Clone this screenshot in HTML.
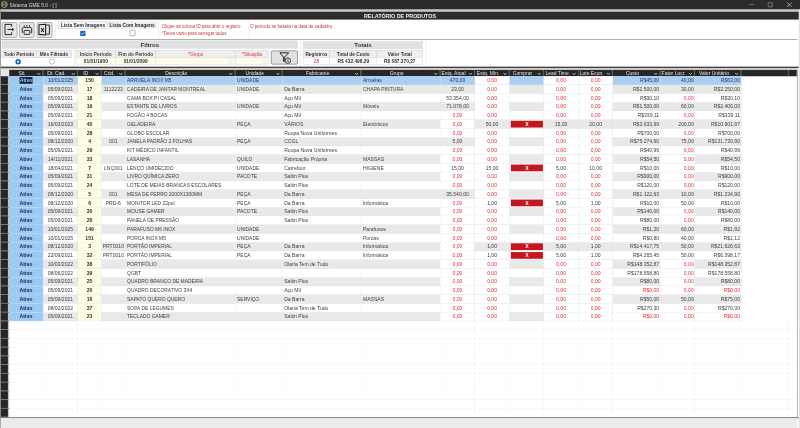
<!DOCTYPE html><html><head><meta charset="utf-8"><style>
*{box-sizing:border-box;margin:0;padding:0}
html,body{width:800px;height:428px;overflow:hidden;background:#fff}
#s{filter:contrast(1.0001);position:absolute;left:0;top:0;width:1920px;height:1027px;transform:scale(0.4166667);transform-origin:0 0;font-family:"Liberation Sans",sans-serif;background:#fff;overflow:hidden}
.a{position:absolute}
.tx{position:absolute;white-space:nowrap;line-height:1}
.hc{position:absolute;top:168px;height:15px;background:#262626;color:#e4e4e4;font-size:12px;line-height:16px;text-align:center;border-right:2px solid #707070}
.hc svg{position:absolute;right:4px;top:6px}
.c{position:absolute;height:21px;font-size:12.2px;line-height:20px;color:#404040;white-space:nowrap;overflow:hidden;border-right:1px solid #d4dce5;border-bottom:1px solid #d4dce5}
.l{text-align:left;padding-left:4px}
.r{text-align:right;padding-right:2px}
.cc{text-align:center}
.red{color:#e0303a}
.sel{position:absolute;left:2px;width:20px;height:21px;background:#262626;border-bottom:2px solid #8a8a8a;border-right:3px solid #c4c4c4}
.btn{position:absolute;top:53px;height:38px;background:#e4e4e4;border:2px solid #a4a4a4;border-radius:4px}
.hcell{position:absolute;background:#efefef;border:1px solid #d4d4d4;font-size:11.5px;font-weight:bold;color:#333;text-align:center;line-height:16px;white-space:nowrap;border-color:#cdcdcd}
</style></head><body><div id="s">
<div class="a" style="left:0;top:0;width:1920px;height:23px;background:#2b2b2b"></div>
<div class="a" style="left:0;top:23px;width:1920px;height:5px;background:#c9c9c9"></div>
<div class="a" style="left:0;top:22px;width:2px;height:1005px;background:#8a8a8a"></div>
<div class="a" style="left:1917px;top:23px;width:3px;height:1004px;background:#e4e4e4"></div>
<div class="a" style="left:1913px;top:167px;width:2px;height:837px;background:#a8a8a8"></div>
<div class="a" style="left:2px;top:28px;width:1915px;height:19px;background:#2d2d2d"></div>
<svg class="a" style="left:2px;top:2px" width="17" height="17" viewBox="0 0 17 17"><circle cx="8.4" cy="8.6" r="7.2" fill="#7d735c" stroke="#b4aa8c" stroke-width="1.6"/><path d="M4.6 3.8 H12.2 L8.4 7.6 Z M4.2 13.6 H12.6 L8.4 9.6 Z" fill="#2a2620"/></svg>
<div class="tx" style="left:23px;top:7px;font-size:11.8px;color:#dcdcdc">Sistema GME 5.0 - [ ]</div>
<div class="a" style="left:1798px;top:10px;width:11px;height:1.3px;background:#d8d8d8"></div>
<div class="a" style="left:1843px;top:6px;width:11px;height:11px;border:1.5px solid #e0e0e0;border-radius:2px"></div>
<div class="a" style="left:1846px;top:4px;width:10px;height:10px;border-top:1.5px solid #e0e0e0;border-right:1.5px solid #e0e0e0;border-radius:2px"></div>
<svg class="a" style="left:1888px;top:5px" width="13" height="13" viewBox="0 0 13 13"><path d="M1 1 L12 12 M12 1 L1 12" stroke="#e0e0e0" stroke-width="1.5"/></svg>
<div class="tx" style="left:0;top:32px;width:1920px;text-align:center;font-size:12.9px;font-weight:bold;color:#f0f0f0">RELATÓRIO DE PRODUTOS</div>
<div class="btn" style="left:4px;width:38px"></div>
<div class="btn" style="left:46px;width:37px"></div>
<div class="btn" style="left:88px;width:38px"></div>
<svg class="a" style="left:4px;top:53px" width="38" height="38" viewBox="0 0 38 38"><path d="M24 11 V5.5 H8 V30 H24 V24.5" fill="none" stroke="#1a1a1a" stroke-width="2.3"/><path d="M13.5 17.7 H26" stroke="#1a1a1a" stroke-width="2.2"/><path d="M25 13.6 L30 17.7 L25 21.8 Z" fill="#1a1a1a"/></svg>
<svg class="a" style="left:46px;top:53px" width="38" height="38" viewBox="0 0 38 38"><path d="M12.3 6.6 V11.5 M24.8 6.6 V11.5" stroke="#1a1a1a" stroke-width="1.6"/><rect x="17" y="7" width="2.6" height="3" fill="#1a1a1a"/><path d="M9 25 H7.5 V16 Q7.5 12.8 10.5 12.8 H27 Q30 12.8 30 16 V25 H28" fill="none" stroke="#1a1a1a" stroke-width="2.2" stroke-linejoin="round"/><rect x="11.8" y="20" width="14" height="9.5" rx="2" fill="none" stroke="#1a1a1a" stroke-width="2.2"/></svg>
<svg class="a" style="left:88px;top:53px" width="38" height="38" viewBox="0 0 38 38"><path d="M5.5 6.5 L21.5 5 V31 L5.5 29.5 Z" fill="none" stroke="#1a1a1a" stroke-width="2.6" stroke-linejoin="round"/><path d="M23.5 7 H30.5 V29 H23.5" fill="none" stroke="#1a1a1a" stroke-width="2.2"/><path d="M10.5 14 L17.5 24 M17.5 14 L10.5 24" stroke="#1a1a1a" stroke-width="2.4"/></svg>
<div class="a" style="left:132px;top:50px;width:1px;height:42px;background:#d8d8d8"></div>
<div class="a" style="left:380px;top:50px;width:1px;height:42px;background:#d8d8d8"></div>
<div class="a" style="left:597px;top:50px;width:1px;height:42px;background:#d8d8d8"></div>
<div class="hcell" style="left:139px;top:52px;width:120px;height:17px;line-height:16px;background:#f6f6f6;border-color:#b8b8b8;font-size:11.8px;color:#2a2a2a">Lista Sem Imagens</div>
<div class="hcell" style="left:259px;top:52px;width:116px;height:17px;line-height:16px;background:#ededed;border-color:#e4e4e4;font-size:11.8px;color:#2a2a2a">Lista Com Imagens</div>
<svg class="a" style="left:192px;top:73px" width="14" height="14" viewBox="0 0 14 14"><rect x="0.5" y="0.5" width="13" height="13" rx="2.5" fill="#1c64b8"/><path d="M3.3 7 L6 9.6 L10.8 4.4" fill="none" stroke="#fff" stroke-width="1.6"/></svg>
<div class="a" style="left:311px;top:72px;width:14px;height:14px;border:1.2px solid #555;border-radius:2.5px;background:#fff"></div>
<div class="tx" style="left:389px;top:57px;font-size:10.6px;color:#c8363c">Clique na coluna ID para abrir o registro</div>
<div class="tx" style="left:389px;top:74px;font-size:10.6px;color:#c8363c">*Deixe vazio para carregar todos</div>
<div class="tx" style="left:600px;top:57px;font-size:10.9px;color:#c8363c">O período se baseia na data de cadastro</div>
<div class="a" style="left:2px;top:94px;width:1912px;height:2px;background:#a0a0a0"></div>
<div class="a" style="left:4px;top:97px;width:711px;height:20px;background:#e1e1e1"></div>
<div class="tx" style="left:4px;top:100px;width:711px;text-align:center;font-size:14.5px;font-weight:bold;color:#333">Filtros</div>
<div class="hcell" style="left:4px;top:120px;width:83px;height:19px;line-height:19px">Todo Período</div>
<div class="hcell" style="left:86px;top:120px;width:87px;height:19px;line-height:19px">Mês Filtrado</div>
<svg class="a" style="left:36px;top:141px" width="15" height="15" viewBox="0 0 15 15"><circle cx="7.5" cy="7" r="6.6" fill="#1c5ea8"/><circle cx="7.5" cy="7" r="2.8" fill="#b8ecff"/></svg>
<svg class="a" style="left:117px;top:141px" width="15" height="15" viewBox="0 0 15 15"><circle cx="7.5" cy="7" r="6" fill="#fff" stroke="#a0a0a0" stroke-width="1.6"/></svg>
<div class="a" style="left:178px;top:97px;width:1px;height:64px;background:#d8d8d8"></div>
<div class="hcell" style="left:182px;top:120px;width:96px;height:19px;line-height:19px;color:#404040;font-weight:bold">Início Período</div>
<div class="hcell" style="left:277px;top:120px;width:97px;height:19px;line-height:19px;color:#404040;font-weight:bold">Fim do Período</div>
<div class="hcell" style="left:373px;top:120px;width:193px;height:19px;line-height:19px;color:#d8363c;font-weight:normal">*Grupo</div>
<div class="hcell" style="left:565px;top:120px;width:80px;height:19px;line-height:19px;color:#d8363c;font-weight:normal">*Situação</div>
<div class="a" style="left:182px;top:138px;width:96px;height:17px;background:#fffde9;border:1px solid #d4d4d4;font-size:11.5px;font-weight:bold;color:#333;text-align:center;line-height:16px">01/01/1900</div>
<div class="a" style="left:277px;top:138px;width:97px;height:17px;background:#fffde9;border:1px solid #d4d4d4;font-size:11.5px;font-weight:bold;color:#333;text-align:center;line-height:16px">01/01/2099</div>
<div class="a" style="left:373px;top:138px;width:193px;height:17px;background:#fffde9;border:1px solid #d4d4d4;font-size:11.5px;font-weight:bold;color:#333;text-align:center;line-height:16px"></div>
<div class="a" style="left:565px;top:138px;width:80px;height:17px;background:#fffde9;border:1px solid #d4d4d4;font-size:11.5px;font-weight:bold;color:#333;text-align:center;line-height:16px"></div>
<div class="a" style="left:548px;top:141px;width:14px;height:12px;background:#fff;border:1px solid #dcdcdc"></div>
<svg class="a" style="left:551px;top:144px" width="8" height="6" viewBox="0 0 8 6"><path d="M0.5 1 L4 4.5 L7.5 1" fill="none" stroke="#9a9a9a" stroke-width="1"/></svg>
<div class="a" style="left:627px;top:141px;width:14px;height:12px;background:#fff;border:1px solid #dcdcdc"></div>
<svg class="a" style="left:630px;top:144px" width="8" height="6" viewBox="0 0 8 6"><path d="M0.5 1 L4 4.5 L7.5 1" fill="none" stroke="#9a9a9a" stroke-width="1"/></svg>
<div class="a" style="left:650px;top:121px;width:65px;height:34px;background:#e1e1e1;border:2px solid #8c8c8c;border-radius:4px"></div>
<svg class="a" style="left:650px;top:121px" width="65" height="34" viewBox="0 0 65 34"><path d="M21.8 5.8 H42.8 L31.5 17.5 Z" fill="none" stroke="#1a1a1a" stroke-width="2.3" stroke-linejoin="round"/><rect x="29.5" y="16.5" width="3.8" height="10.5" fill="#1a1a1a"/><circle cx="40.8" cy="24.5" r="6.6" fill="#e1e1e1" stroke="#1a1a1a" stroke-width="2"/><path d="M38.3 22 L43.3 27 M43.3 22 L38.3 27" stroke="#1a1a1a" stroke-width="1.5"/></svg>
<div class="a" style="left:721px;top:97px;width:1px;height:64px;background:#d8d8d8"></div>
<div class="a" style="left:727px;top:99px;width:288px;height:19px;background:#e1e1e1"></div>
<div class="tx" style="left:727px;top:101px;width:288px;text-align:center;font-size:14.5px;font-weight:bold;color:#333">Totais</div>
<div class="hcell" style="left:727px;top:120px;width:65px;height:19px;line-height:19px">Registros</div>
<div class="hcell" style="left:791px;top:120px;width:114px;height:19px;line-height:19px">Total de Custo</div>
<div class="hcell" style="left:904px;top:120px;width:111px;height:19px;line-height:19px">Valor Total</div>
<div class="a" style="left:727px;top:138px;width:65px;height:17px;background:#fff;border:1px solid #d4d4d4;font-size:11.5px;font-weight:bold;color:#c8303a;text-align:center;line-height:16px"><span style="font-weight:normal">28</span></div>
<div class="a" style="left:791px;top:138px;width:114px;height:17px;background:#fff;border:1px solid #d4d4d4;font-size:11.5px;font-weight:bold;color:#303030;text-align:center;line-height:16px">R$ 432.498,29</div>
<div class="a" style="left:904px;top:138px;width:111px;height:17px;background:#fff;border:1px solid #d4d4d4;font-size:11.5px;font-weight:bold;color:#303030;text-align:center;line-height:16px">R$ 587.370,27</div>
<div class="a" style="left:1022px;top:97px;width:1px;height:64px;background:#d8d8d8"></div>
<div class="a" style="left:2px;top:160px;width:1915px;height:3px;background:#2a2a2a"></div>
<div class="a" style="left:2px;top:163px;width:1912px;height:5px;background:#c8c8c8"></div>
<div class="a" style="left:2px;top:166px;width:20px;height:17px;background:#e6e6e6"></div>
<div class="hc" style="left:22px;width:82px;padding-right:18px">Sit.<svg width="10" height="7" viewBox="0 0 10 7"><path d="M1.5 1.5 L5 5 L8.5 1.5" fill="none" stroke="#d4d4d4" stroke-width="2.3"/></svg></div>
<div class="hc" style="left:104px;width:83px;padding-right:18px">Dt. Cad.<svg width="10" height="7" viewBox="0 0 10 7"><path d="M1.5 1.5 L5 5 L8.5 1.5" fill="none" stroke="#d4d4d4" stroke-width="2.3"/></svg></div>
<div class="hc" style="left:187px;width:57px;padding-right:18px">ID<svg width="10" height="7" viewBox="0 0 10 7"><path d="M1.5 1.5 L5 5 L8.5 1.5" fill="none" stroke="#d4d4d4" stroke-width="2.3"/></svg></div>
<div class="hc" style="left:244px;width:57px;padding-right:18px">Cód.<svg width="10" height="7" viewBox="0 0 10 7"><path d="M1.5 1.5 L5 5 L8.5 1.5" fill="none" stroke="#d4d4d4" stroke-width="2.3"/></svg></div>
<div class="hc" style="left:301px;width:264px;padding-right:18px">Descrição<svg width="10" height="7" viewBox="0 0 10 7"><path d="M1.5 1.5 L5 5 L8.5 1.5" fill="none" stroke="#d4d4d4" stroke-width="2.3"/></svg></div>
<div class="hc" style="left:565px;width:113px;padding-right:18px">Unidade<svg width="10" height="7" viewBox="0 0 10 7"><path d="M1.5 1.5 L5 5 L8.5 1.5" fill="none" stroke="#d4d4d4" stroke-width="2.3"/></svg></div>
<div class="hc" style="left:678px;width:189px;padding-right:18px">Fabricante<svg width="10" height="7" viewBox="0 0 10 7"><path d="M1.5 1.5 L5 5 L8.5 1.5" fill="none" stroke="#d4d4d4" stroke-width="2.3"/></svg></div>
<div class="hc" style="left:867px;width:190px;padding-right:18px">Grupo<svg width="10" height="7" viewBox="0 0 10 7"><path d="M1.5 1.5 L5 5 L8.5 1.5" fill="none" stroke="#d4d4d4" stroke-width="2.3"/></svg></div>
<div class="hc" style="left:1057px;width:83px;padding-right:18px">Estq. Atual<svg width="10" height="7" viewBox="0 0 10 7"><path d="M1.5 1.5 L5 5 L8.5 1.5" fill="none" stroke="#d4d4d4" stroke-width="2.3"/></svg></div>
<div class="hc" style="left:1140px;width:83px;padding-right:18px">Estq. Mín.<svg width="10" height="7" viewBox="0 0 10 7"><path d="M1.5 1.5 L5 5 L8.5 1.5" fill="none" stroke="#d4d4d4" stroke-width="2.3"/></svg></div>
<div class="hc" style="left:1223px;width:82px;padding-right:18px">Comprar<svg width="10" height="7" viewBox="0 0 10 7"><path d="M1.5 1.5 L5 5 L8.5 1.5" fill="none" stroke="#d4d4d4" stroke-width="2.3"/></svg></div>
<div class="hc" style="left:1305px;width:84px;padding-right:18px">Lead Time<svg width="10" height="7" viewBox="0 0 10 7"><path d="M1.5 1.5 L5 5 L8.5 1.5" fill="none" stroke="#d4d4d4" stroke-width="2.3"/></svg></div>
<div class="hc" style="left:1389px;width:82px;padding-right:18px">Lote Econ.<svg width="10" height="7" viewBox="0 0 10 7"><path d="M1.5 1.5 L5 5 L8.5 1.5" fill="none" stroke="#d4d4d4" stroke-width="2.3"/></svg></div>
<div class="hc" style="left:1471px;width:114px;padding-right:18px">Custo<svg width="10" height="7" viewBox="0 0 10 7"><path d="M1.5 1.5 L5 5 L8.5 1.5" fill="none" stroke="#d4d4d4" stroke-width="2.3"/></svg></div>
<div class="hc" style="left:1585px;width:83px;padding-right:18px">Fator Lucr.<svg width="10" height="7" viewBox="0 0 10 7"><path d="M1.5 1.5 L5 5 L8.5 1.5" fill="none" stroke="#d4d4d4" stroke-width="2.3"/></svg></div>
<div class="hc" style="left:1668px;width:111px;padding-right:18px">Valor Unitário<svg width="10" height="7" viewBox="0 0 10 7"><path d="M1.5 1.5 L5 5 L8.5 1.5" fill="none" stroke="#d4d4d4" stroke-width="2.3"/></svg></div>
<div class="hc" style="left:1779px;width:114px;padding-right:0px"></div>
<div class="hc" style="left:1893px;width:20px;padding-right:0px"></div>
<div class="sel" style="top:183px"></div>
<div class="c cc" style="left:22px;top:183px;width:82px;background:#9ccaf4;color:#16264a;font-weight:bold;font-size:12.4px;"><span style="background:#0d1c3c;color:#b0d4f4;padding:1px 1px 2px;font-size:11.6px">Ativo</span></div>
<div class="c cc" style="left:104px;top:183px;width:83px;background:#a9d0f2;color:#1e3c66;">10/01/2025</div>
<div class="c cc" style="left:187px;top:183px;width:57px;background:#fffce6;color:#303030;font-weight:bold;">150</div>
<div class="c cc" style="left:244px;top:183px;width:57px;background:#a9d0f2;color:#1e3c66;"></div>
<div class="c l" style="left:301px;top:183px;width:264px;background:#a9d0f2;color:#1e3c66;font-size:11.8px;">ARRUELA INOX M5</div>
<div class="c l" style="left:565px;top:183px;width:113px;background:#a9d0f2;color:#1e3c66;font-size:11.8px;">UNIDADE</div>
<div class="c l" style="left:678px;top:183px;width:189px;background:#a9d0f2;color:#1e3c66;"></div>
<div class="c l" style="left:867px;top:183px;width:190px;background:#a9d0f2;color:#1e3c66;">Arruelas</div>
<div class="c cc" style="left:1057px;top:183px;width:83px;background:#a9d0f2;color:#1e3c66;">470,00</div>
<div class="c cc" style="left:1140px;top:183px;width:83px;background:#ffffff;color:#e0303a;">0,00</div>
<div class="c cc" style="left:1223px;top:183px;width:82px;background:#a9d0f2;color:#1e3c66;"></div>
<div class="c cc" style="left:1305px;top:183px;width:84px;background:#ffffff;color:#e0303a;">0,00</div>
<div class="c cc" style="left:1389px;top:183px;width:82px;background:#ffffff;color:#e0303a;">0,00</div>
<div class="c r" style="left:1471px;top:183px;width:114px;background:#a9d0f2;color:#1e3c66;">R$45,00</div>
<div class="c r" style="left:1585px;top:183px;width:83px;background:#a9d0f2;color:#1e3c66;">40,00</div>
<div class="c r" style="left:1668px;top:183px;width:111px;background:#a9d0f2;color:#1e3c66;">R$63,00</div>
<div class="sel" style="top:204px"></div>
<div class="c cc" style="left:22px;top:204px;width:82px;background:#9ccaf4;color:#16264a;font-weight:bold;font-size:12.4px;">Ativo</div>
<div class="c cc" style="left:104px;top:204px;width:83px;background:#e9e9e9;color:#404040;">05/09/2021</div>
<div class="c cc" style="left:187px;top:204px;width:57px;background:#fffce6;color:#303030;font-weight:bold;">17</div>
<div class="c cc" style="left:244px;top:204px;width:57px;background:#e9e9e9;color:#404040;">1112233</div>
<div class="c l" style="left:301px;top:204px;width:264px;background:#e9e9e9;color:#404040;font-size:11.8px;">CADEIRA DE JANTAR MONTREAL</div>
<div class="c l" style="left:565px;top:204px;width:113px;background:#e9e9e9;color:#404040;font-size:11.8px;">UNIDADE</div>
<div class="c l" style="left:678px;top:204px;width:189px;background:#e9e9e9;color:#404040;">Da Barra</div>
<div class="c l" style="left:867px;top:204px;width:190px;background:#e9e9e9;color:#404040;">CHAPA PINTURA</div>
<div class="c cc" style="left:1057px;top:204px;width:83px;background:#e9e9e9;color:#404040;">23,00</div>
<div class="c cc" style="left:1140px;top:204px;width:83px;background:#ffffff;color:#e0303a;">0,00</div>
<div class="c cc" style="left:1223px;top:204px;width:82px;background:#e9e9e9;color:#404040;"></div>
<div class="c cc" style="left:1305px;top:204px;width:84px;background:#ffffff;color:#e0303a;">0,00</div>
<div class="c cc" style="left:1389px;top:204px;width:82px;background:#ffffff;color:#e0303a;">0,00</div>
<div class="c r" style="left:1471px;top:204px;width:114px;background:#e9e9e9;color:#404040;">R$2.500,00</div>
<div class="c r" style="left:1585px;top:204px;width:83px;background:#e9e9e9;color:#404040;">30,00</div>
<div class="c r" style="left:1668px;top:204px;width:111px;background:#e9e9e9;color:#404040;">R$3.250,00</div>
<div class="sel" style="top:225px"></div>
<div class="c cc" style="left:22px;top:225px;width:82px;background:#9ccaf4;color:#16264a;font-weight:bold;font-size:12.4px;">Ativo</div>
<div class="c cc" style="left:104px;top:225px;width:83px;background:#ffffff;color:#404040;">05/09/2021</div>
<div class="c cc" style="left:187px;top:225px;width:57px;background:#fffce6;color:#303030;font-weight:bold;">18</div>
<div class="c cc" style="left:244px;top:225px;width:57px;background:#ffffff;color:#404040;"></div>
<div class="c l" style="left:301px;top:225px;width:264px;background:#ffffff;color:#404040;font-size:11.8px;">CAMA BOX PI CASAL</div>
<div class="c l" style="left:565px;top:225px;width:113px;background:#ffffff;color:#404040;font-size:11.8px;"></div>
<div class="c l" style="left:678px;top:225px;width:189px;background:#ffffff;color:#404040;">Aço Mil</div>
<div class="c l" style="left:867px;top:225px;width:190px;background:#ffffff;color:#404040;"></div>
<div class="c cc" style="left:1057px;top:225px;width:83px;background:#ffffff;color:#404040;">53.354,00</div>
<div class="c cc" style="left:1140px;top:225px;width:83px;background:#ffffff;color:#e0303a;">0,00</div>
<div class="c cc" style="left:1223px;top:225px;width:82px;background:#ffffff;color:#404040;"></div>
<div class="c cc" style="left:1305px;top:225px;width:84px;background:#ffffff;color:#e0303a;">0,00</div>
<div class="c cc" style="left:1389px;top:225px;width:82px;background:#ffffff;color:#e0303a;">0,00</div>
<div class="c r" style="left:1471px;top:225px;width:114px;background:#ffffff;color:#404040;">R$30,10</div>
<div class="c r" style="left:1585px;top:225px;width:83px;background:#ffffff;color:#e0303a;">0,00</div>
<div class="c r" style="left:1668px;top:225px;width:111px;background:#ffffff;color:#404040;">R$30,10</div>
<div class="sel" style="top:246px"></div>
<div class="c cc" style="left:22px;top:246px;width:82px;background:#9ccaf4;color:#16264a;font-weight:bold;font-size:12.4px;">Ativo</div>
<div class="c cc" style="left:104px;top:246px;width:83px;background:#e9e9e9;color:#404040;">05/09/2021</div>
<div class="c cc" style="left:187px;top:246px;width:57px;background:#fffce6;color:#303030;font-weight:bold;">19</div>
<div class="c cc" style="left:244px;top:246px;width:57px;background:#e9e9e9;color:#404040;"></div>
<div class="c l" style="left:301px;top:246px;width:264px;background:#e9e9e9;color:#404040;font-size:11.8px;">ESTANTE DE LIVROS</div>
<div class="c l" style="left:565px;top:246px;width:113px;background:#e9e9e9;color:#404040;font-size:11.8px;">UNIDADE</div>
<div class="c l" style="left:678px;top:246px;width:189px;background:#e9e9e9;color:#404040;">Aço Mil</div>
<div class="c l" style="left:867px;top:246px;width:190px;background:#e9e9e9;color:#404040;">Móveis</div>
<div class="c cc" style="left:1057px;top:246px;width:83px;background:#e9e9e9;color:#404040;">71.078,00</div>
<div class="c cc" style="left:1140px;top:246px;width:83px;background:#ffffff;color:#e0303a;">0,00</div>
<div class="c cc" style="left:1223px;top:246px;width:82px;background:#e9e9e9;color:#404040;"></div>
<div class="c cc" style="left:1305px;top:246px;width:84px;background:#ffffff;color:#e0303a;">0,00</div>
<div class="c cc" style="left:1389px;top:246px;width:82px;background:#ffffff;color:#e0303a;">0,00</div>
<div class="c r" style="left:1471px;top:246px;width:114px;background:#e9e9e9;color:#404040;">R$1.500,00</div>
<div class="c r" style="left:1585px;top:246px;width:83px;background:#e9e9e9;color:#404040;">60,00</div>
<div class="c r" style="left:1668px;top:246px;width:111px;background:#e9e9e9;color:#404040;">R$2.400,00</div>
<div class="sel" style="top:267px"></div>
<div class="c cc" style="left:22px;top:267px;width:82px;background:#9ccaf4;color:#16264a;font-weight:bold;font-size:12.4px;">Ativo</div>
<div class="c cc" style="left:104px;top:267px;width:83px;background:#ffffff;color:#404040;">05/09/2021</div>
<div class="c cc" style="left:187px;top:267px;width:57px;background:#fffce6;color:#303030;font-weight:bold;">21</div>
<div class="c cc" style="left:244px;top:267px;width:57px;background:#ffffff;color:#404040;"></div>
<div class="c l" style="left:301px;top:267px;width:264px;background:#ffffff;color:#404040;font-size:11.8px;">FOGÃO 4 BOCAS</div>
<div class="c l" style="left:565px;top:267px;width:113px;background:#ffffff;color:#404040;font-size:11.8px;"></div>
<div class="c l" style="left:678px;top:267px;width:189px;background:#ffffff;color:#404040;">Aço Mil</div>
<div class="c l" style="left:867px;top:267px;width:190px;background:#ffffff;color:#404040;"></div>
<div class="c cc" style="left:1057px;top:267px;width:83px;background:#ffffff;color:#e0303a;">0,00</div>
<div class="c cc" style="left:1140px;top:267px;width:83px;background:#ffffff;color:#e0303a;">0,00</div>
<div class="c cc" style="left:1223px;top:267px;width:82px;background:#ffffff;color:#404040;"></div>
<div class="c cc" style="left:1305px;top:267px;width:84px;background:#ffffff;color:#e0303a;">0,00</div>
<div class="c cc" style="left:1389px;top:267px;width:82px;background:#ffffff;color:#e0303a;">0,00</div>
<div class="c r" style="left:1471px;top:267px;width:114px;background:#ffffff;color:#404040;">R$339,11</div>
<div class="c r" style="left:1585px;top:267px;width:83px;background:#ffffff;color:#e0303a;">0,00</div>
<div class="c r" style="left:1668px;top:267px;width:111px;background:#ffffff;color:#404040;">R$339,11</div>
<div class="sel" style="top:288px"></div>
<div class="c cc" style="left:22px;top:288px;width:82px;background:#9ccaf4;color:#16264a;font-weight:bold;font-size:12.4px;">Ativo</div>
<div class="c cc" style="left:104px;top:288px;width:83px;background:#e9e9e9;color:#404040;">16/03/2023</div>
<div class="c cc" style="left:187px;top:288px;width:57px;background:#fffce6;color:#303030;font-weight:bold;">40</div>
<div class="c cc" style="left:244px;top:288px;width:57px;background:#e9e9e9;color:#404040;"></div>
<div class="c l" style="left:301px;top:288px;width:264px;background:#e9e9e9;color:#404040;font-size:11.8px;">GELADEIRA</div>
<div class="c l" style="left:565px;top:288px;width:113px;background:#e9e9e9;color:#404040;font-size:11.8px;">PEÇA</div>
<div class="c l" style="left:678px;top:288px;width:189px;background:#e9e9e9;color:#404040;">VÁRIOS</div>
<div class="c l" style="left:867px;top:288px;width:190px;background:#e9e9e9;color:#404040;">Eletrônicos</div>
<div class="c cc" style="left:1057px;top:288px;width:83px;background:#ffffff;color:#e0303a;">0,00</div>
<div class="c cc" style="left:1140px;top:288px;width:83px;background:#e9e9e9;color:#404040;">50,00</div>
<div class="c cc" style="left:1223px;top:288px;width:82px;background:#e9e9e9;color:#404040;"><span style="position:absolute;left:3px;top:2px;right:1px;bottom:2px;background:#c4161c;color:#fff;font-weight:bold;line-height:17px;text-align:center">X</span></div>
<div class="c cc" style="left:1305px;top:288px;width:84px;background:#e9e9e9;color:#404040;">15,00</div>
<div class="c cc" style="left:1389px;top:288px;width:82px;background:#e9e9e9;color:#404040;">20,00</div>
<div class="c r" style="left:1471px;top:288px;width:114px;background:#e9e9e9;color:#404040;">R$3.633,99</div>
<div class="c r" style="left:1585px;top:288px;width:83px;background:#e9e9e9;color:#404040;">200,00</div>
<div class="c r" style="left:1668px;top:288px;width:111px;background:#e9e9e9;color:#404040;">R$10.901,97</div>
<div class="sel" style="top:309px"></div>
<div class="c cc" style="left:22px;top:309px;width:82px;background:#9ccaf4;color:#16264a;font-weight:bold;font-size:12.4px;">Ativo</div>
<div class="c cc" style="left:104px;top:309px;width:83px;background:#ffffff;color:#404040;">05/09/2021</div>
<div class="c cc" style="left:187px;top:309px;width:57px;background:#fffce6;color:#303030;font-weight:bold;">28</div>
<div class="c cc" style="left:244px;top:309px;width:57px;background:#ffffff;color:#404040;"></div>
<div class="c l" style="left:301px;top:309px;width:264px;background:#ffffff;color:#404040;font-size:11.8px;">GLOBO ESCOLAR</div>
<div class="c l" style="left:565px;top:309px;width:113px;background:#ffffff;color:#404040;font-size:11.8px;"></div>
<div class="c l" style="left:678px;top:309px;width:189px;background:#ffffff;color:#404040;">Roupa Nova Uniformes</div>
<div class="c l" style="left:867px;top:309px;width:190px;background:#ffffff;color:#404040;"></div>
<div class="c cc" style="left:1057px;top:309px;width:83px;background:#ffffff;color:#e0303a;">0,00</div>
<div class="c cc" style="left:1140px;top:309px;width:83px;background:#ffffff;color:#e0303a;">0,00</div>
<div class="c cc" style="left:1223px;top:309px;width:82px;background:#ffffff;color:#404040;"></div>
<div class="c cc" style="left:1305px;top:309px;width:84px;background:#ffffff;color:#e0303a;">0,00</div>
<div class="c cc" style="left:1389px;top:309px;width:82px;background:#ffffff;color:#e0303a;">0,00</div>
<div class="c r" style="left:1471px;top:309px;width:114px;background:#ffffff;color:#404040;">R$700,00</div>
<div class="c r" style="left:1585px;top:309px;width:83px;background:#ffffff;color:#e0303a;">0,00</div>
<div class="c r" style="left:1668px;top:309px;width:111px;background:#ffffff;color:#404040;">R$700,00</div>
<div class="sel" style="top:330px"></div>
<div class="c cc" style="left:22px;top:330px;width:82px;background:#9ccaf4;color:#16264a;font-weight:bold;font-size:12.4px;">Ativo</div>
<div class="c cc" style="left:104px;top:330px;width:83px;background:#e9e9e9;color:#404040;">08/12/2020</div>
<div class="c cc" style="left:187px;top:330px;width:57px;background:#fffce6;color:#303030;font-weight:bold;">4</div>
<div class="c cc" style="left:244px;top:330px;width:57px;background:#e9e9e9;color:#404040;">001</div>
<div class="c l" style="left:301px;top:330px;width:264px;background:#e9e9e9;color:#404040;font-size:11.8px;">JANELA PADRÃO 2 FOLHAS</div>
<div class="c l" style="left:565px;top:330px;width:113px;background:#e9e9e9;color:#404040;font-size:11.8px;">PEÇA</div>
<div class="c l" style="left:678px;top:330px;width:189px;background:#e9e9e9;color:#404040;">CCGL</div>
<div class="c l" style="left:867px;top:330px;width:190px;background:#e9e9e9;color:#404040;"></div>
<div class="c cc" style="left:1057px;top:330px;width:83px;background:#e9e9e9;color:#404040;">5,00</div>
<div class="c cc" style="left:1140px;top:330px;width:83px;background:#ffffff;color:#e0303a;">0,00</div>
<div class="c cc" style="left:1223px;top:330px;width:82px;background:#e9e9e9;color:#404040;"></div>
<div class="c cc" style="left:1305px;top:330px;width:84px;background:#ffffff;color:#e0303a;">0,00</div>
<div class="c cc" style="left:1389px;top:330px;width:82px;background:#ffffff;color:#e0303a;">0,00</div>
<div class="c r" style="left:1471px;top:330px;width:114px;background:#e9e9e9;color:#404040;">R$75.274,60</div>
<div class="c r" style="left:1585px;top:330px;width:83px;background:#e9e9e9;color:#404040;">75,00</div>
<div class="c r" style="left:1668px;top:330px;width:111px;background:#e9e9e9;color:#404040;">R$131.730,90</div>
<div class="sel" style="top:351px"></div>
<div class="c cc" style="left:22px;top:351px;width:82px;background:#9ccaf4;color:#16264a;font-weight:bold;font-size:12.4px;">Ativo</div>
<div class="c cc" style="left:104px;top:351px;width:83px;background:#ffffff;color:#404040;">05/09/2021</div>
<div class="c cc" style="left:187px;top:351px;width:57px;background:#fffce6;color:#303030;font-weight:bold;">29</div>
<div class="c cc" style="left:244px;top:351px;width:57px;background:#ffffff;color:#404040;"></div>
<div class="c l" style="left:301px;top:351px;width:264px;background:#ffffff;color:#404040;font-size:11.8px;">KIT MÉDICO INFANTIL</div>
<div class="c l" style="left:565px;top:351px;width:113px;background:#ffffff;color:#404040;font-size:11.8px;"></div>
<div class="c l" style="left:678px;top:351px;width:189px;background:#ffffff;color:#404040;">Roupa Nova Uniformes</div>
<div class="c l" style="left:867px;top:351px;width:190px;background:#ffffff;color:#404040;"></div>
<div class="c cc" style="left:1057px;top:351px;width:83px;background:#ffffff;color:#e0303a;">0,00</div>
<div class="c cc" style="left:1140px;top:351px;width:83px;background:#ffffff;color:#e0303a;">0,00</div>
<div class="c cc" style="left:1223px;top:351px;width:82px;background:#ffffff;color:#404040;"></div>
<div class="c cc" style="left:1305px;top:351px;width:84px;background:#ffffff;color:#e0303a;">0,00</div>
<div class="c cc" style="left:1389px;top:351px;width:82px;background:#ffffff;color:#e0303a;">0,00</div>
<div class="c r" style="left:1471px;top:351px;width:114px;background:#ffffff;color:#404040;">R$40,99</div>
<div class="c r" style="left:1585px;top:351px;width:83px;background:#ffffff;color:#e0303a;">0,00</div>
<div class="c r" style="left:1668px;top:351px;width:111px;background:#ffffff;color:#404040;">R$40,99</div>
<div class="sel" style="top:372px"></div>
<div class="c cc" style="left:22px;top:372px;width:82px;background:#9ccaf4;color:#16264a;font-weight:bold;font-size:12.4px;">Ativo</div>
<div class="c cc" style="left:104px;top:372px;width:83px;background:#e9e9e9;color:#404040;">14/11/2021</div>
<div class="c cc" style="left:187px;top:372px;width:57px;background:#fffce6;color:#303030;font-weight:bold;">33</div>
<div class="c cc" style="left:244px;top:372px;width:57px;background:#e9e9e9;color:#404040;"></div>
<div class="c l" style="left:301px;top:372px;width:264px;background:#e9e9e9;color:#404040;font-size:11.8px;">LASANHA</div>
<div class="c l" style="left:565px;top:372px;width:113px;background:#e9e9e9;color:#404040;font-size:11.8px;">QUILO</div>
<div class="c l" style="left:678px;top:372px;width:189px;background:#e9e9e9;color:#404040;">Fabricação Própria</div>
<div class="c l" style="left:867px;top:372px;width:190px;background:#e9e9e9;color:#404040;">MASSAS</div>
<div class="c cc" style="left:1057px;top:372px;width:83px;background:#ffffff;color:#e0303a;">0,00</div>
<div class="c cc" style="left:1140px;top:372px;width:83px;background:#ffffff;color:#e0303a;">0,00</div>
<div class="c cc" style="left:1223px;top:372px;width:82px;background:#e9e9e9;color:#404040;"></div>
<div class="c cc" style="left:1305px;top:372px;width:84px;background:#ffffff;color:#e0303a;">0,00</div>
<div class="c cc" style="left:1389px;top:372px;width:82px;background:#ffffff;color:#e0303a;">0,00</div>
<div class="c r" style="left:1471px;top:372px;width:114px;background:#e9e9e9;color:#404040;">R$54,50</div>
<div class="c r" style="left:1585px;top:372px;width:83px;background:#ffffff;color:#e0303a;">0,00</div>
<div class="c r" style="left:1668px;top:372px;width:111px;background:#e9e9e9;color:#404040;">R$54,50</div>
<div class="sel" style="top:393px"></div>
<div class="c cc" style="left:22px;top:393px;width:82px;background:#9ccaf4;color:#16264a;font-weight:bold;font-size:12.4px;">Ativo</div>
<div class="c cc" style="left:104px;top:393px;width:83px;background:#ffffff;color:#404040;">18/04/2021</div>
<div class="c cc" style="left:187px;top:393px;width:57px;background:#fffce6;color:#303030;font-weight:bold;">7</div>
<div class="c cc" style="left:244px;top:393px;width:57px;background:#ffffff;color:#404040;">LNÇ001</div>
<div class="c l" style="left:301px;top:393px;width:264px;background:#ffffff;color:#404040;font-size:11.8px;">LENÇO UMIDECIDO</div>
<div class="c l" style="left:565px;top:393px;width:113px;background:#ffffff;color:#404040;font-size:11.8px;">UNIDADE</div>
<div class="c l" style="left:678px;top:393px;width:189px;background:#ffffff;color:#404040;">Carrefour</div>
<div class="c l" style="left:867px;top:393px;width:190px;background:#ffffff;color:#404040;">HIGIENE</div>
<div class="c cc" style="left:1057px;top:393px;width:83px;background:#ffffff;color:#404040;">15,00</div>
<div class="c cc" style="left:1140px;top:393px;width:83px;background:#ffffff;color:#404040;">15,00</div>
<div class="c cc" style="left:1223px;top:393px;width:82px;background:#ffffff;color:#404040;"><span style="position:absolute;left:3px;top:2px;right:1px;bottom:2px;background:#c4161c;color:#fff;font-weight:bold;line-height:17px;text-align:center">X</span></div>
<div class="c cc" style="left:1305px;top:393px;width:84px;background:#ffffff;color:#404040;">5,00</div>
<div class="c cc" style="left:1389px;top:393px;width:82px;background:#ffffff;color:#404040;">10,00</div>
<div class="c r" style="left:1471px;top:393px;width:114px;background:#ffffff;color:#404040;">R$10,00</div>
<div class="c r" style="left:1585px;top:393px;width:83px;background:#ffffff;color:#e0303a;">0,00</div>
<div class="c r" style="left:1668px;top:393px;width:111px;background:#ffffff;color:#404040;">R$10,00</div>
<div class="sel" style="top:414px"></div>
<div class="c cc" style="left:22px;top:414px;width:82px;background:#9ccaf4;color:#16264a;font-weight:bold;font-size:12.4px;">Ativo</div>
<div class="c cc" style="left:104px;top:414px;width:83px;background:#e9e9e9;color:#404040;">05/09/2021</div>
<div class="c cc" style="left:187px;top:414px;width:57px;background:#fffce6;color:#303030;font-weight:bold;">31</div>
<div class="c cc" style="left:244px;top:414px;width:57px;background:#e9e9e9;color:#404040;"></div>
<div class="c l" style="left:301px;top:414px;width:264px;background:#e9e9e9;color:#404040;font-size:11.8px;">LIVRO QUÍMICA ZERO</div>
<div class="c l" style="left:565px;top:414px;width:113px;background:#e9e9e9;color:#404040;font-size:11.8px;">PACOTE</div>
<div class="c l" style="left:678px;top:414px;width:189px;background:#e9e9e9;color:#404040;">Saltin Plus</div>
<div class="c l" style="left:867px;top:414px;width:190px;background:#e9e9e9;color:#404040;"></div>
<div class="c cc" style="left:1057px;top:414px;width:83px;background:#ffffff;color:#e0303a;">0,00</div>
<div class="c cc" style="left:1140px;top:414px;width:83px;background:#ffffff;color:#e0303a;">0,00</div>
<div class="c cc" style="left:1223px;top:414px;width:82px;background:#e9e9e9;color:#404040;"></div>
<div class="c cc" style="left:1305px;top:414px;width:84px;background:#ffffff;color:#e0303a;">0,00</div>
<div class="c cc" style="left:1389px;top:414px;width:82px;background:#ffffff;color:#e0303a;">0,00</div>
<div class="c r" style="left:1471px;top:414px;width:114px;background:#e9e9e9;color:#404040;">R$900,00</div>
<div class="c r" style="left:1585px;top:414px;width:83px;background:#ffffff;color:#e0303a;">0,00</div>
<div class="c r" style="left:1668px;top:414px;width:111px;background:#e9e9e9;color:#404040;">R$900,00</div>
<div class="sel" style="top:435px"></div>
<div class="c cc" style="left:22px;top:435px;width:82px;background:#9ccaf4;color:#16264a;font-weight:bold;font-size:12.4px;">Ativo</div>
<div class="c cc" style="left:104px;top:435px;width:83px;background:#ffffff;color:#404040;">05/09/2021</div>
<div class="c cc" style="left:187px;top:435px;width:57px;background:#fffce6;color:#303030;font-weight:bold;">24</div>
<div class="c cc" style="left:244px;top:435px;width:57px;background:#ffffff;color:#404040;"></div>
<div class="c l" style="left:301px;top:435px;width:264px;background:#ffffff;color:#404040;font-size:11.8px;">LOTE DE MEIAS BRANCAS ESCOLARES</div>
<div class="c l" style="left:565px;top:435px;width:113px;background:#ffffff;color:#404040;font-size:11.8px;"></div>
<div class="c l" style="left:678px;top:435px;width:189px;background:#ffffff;color:#404040;">Saltin Plus</div>
<div class="c l" style="left:867px;top:435px;width:190px;background:#ffffff;color:#404040;"></div>
<div class="c cc" style="left:1057px;top:435px;width:83px;background:#ffffff;color:#e0303a;">0,00</div>
<div class="c cc" style="left:1140px;top:435px;width:83px;background:#ffffff;color:#e0303a;">0,00</div>
<div class="c cc" style="left:1223px;top:435px;width:82px;background:#ffffff;color:#404040;"></div>
<div class="c cc" style="left:1305px;top:435px;width:84px;background:#ffffff;color:#e0303a;">0,00</div>
<div class="c cc" style="left:1389px;top:435px;width:82px;background:#ffffff;color:#e0303a;">0,00</div>
<div class="c r" style="left:1471px;top:435px;width:114px;background:#ffffff;color:#404040;">R$120,00</div>
<div class="c r" style="left:1585px;top:435px;width:83px;background:#ffffff;color:#e0303a;">0,00</div>
<div class="c r" style="left:1668px;top:435px;width:111px;background:#ffffff;color:#404040;">R$120,00</div>
<div class="sel" style="top:456px"></div>
<div class="c cc" style="left:22px;top:456px;width:82px;background:#9ccaf4;color:#16264a;font-weight:bold;font-size:12.4px;">Ativo</div>
<div class="c cc" style="left:104px;top:456px;width:83px;background:#e9e9e9;color:#404040;">08/12/2020</div>
<div class="c cc" style="left:187px;top:456px;width:57px;background:#fffce6;color:#303030;font-weight:bold;">5</div>
<div class="c cc" style="left:244px;top:456px;width:57px;background:#e9e9e9;color:#404040;">001</div>
<div class="c l" style="left:301px;top:456px;width:264px;background:#e9e9e9;color:#404040;font-size:11.8px;">MESA DE FERRO 2000X1300MM</div>
<div class="c l" style="left:565px;top:456px;width:113px;background:#e9e9e9;color:#404040;font-size:11.8px;">PEÇA</div>
<div class="c l" style="left:678px;top:456px;width:189px;background:#e9e9e9;color:#404040;">Da Barra</div>
<div class="c l" style="left:867px;top:456px;width:190px;background:#e9e9e9;color:#404040;"></div>
<div class="c cc" style="left:1057px;top:456px;width:83px;background:#e9e9e9;color:#404040;">35.540,00</div>
<div class="c cc" style="left:1140px;top:456px;width:83px;background:#ffffff;color:#e0303a;">0,00</div>
<div class="c cc" style="left:1223px;top:456px;width:82px;background:#e9e9e9;color:#404040;"></div>
<div class="c cc" style="left:1305px;top:456px;width:84px;background:#ffffff;color:#e0303a;">0,00</div>
<div class="c cc" style="left:1389px;top:456px;width:82px;background:#ffffff;color:#e0303a;">0,00</div>
<div class="c r" style="left:1471px;top:456px;width:114px;background:#e9e9e9;color:#404040;">R$1.122,63</div>
<div class="c r" style="left:1585px;top:456px;width:83px;background:#e9e9e9;color:#404040;">10,00</div>
<div class="c r" style="left:1668px;top:456px;width:111px;background:#e9e9e9;color:#404040;">R$1.234,90</div>
<div class="sel" style="top:477px"></div>
<div class="c cc" style="left:22px;top:477px;width:82px;background:#9ccaf4;color:#16264a;font-weight:bold;font-size:12.4px;">Ativo</div>
<div class="c cc" style="left:104px;top:477px;width:83px;background:#ffffff;color:#404040;">08/12/2020</div>
<div class="c cc" style="left:187px;top:477px;width:57px;background:#fffce6;color:#303030;font-weight:bold;">6</div>
<div class="c cc" style="left:244px;top:477px;width:57px;background:#ffffff;color:#404040;">PRD-6</div>
<div class="c l" style="left:301px;top:477px;width:264px;background:#ffffff;color:#404040;font-size:11.8px;">MONITOR LED 22pol</div>
<div class="c l" style="left:565px;top:477px;width:113px;background:#ffffff;color:#404040;font-size:11.8px;">PEÇA</div>
<div class="c l" style="left:678px;top:477px;width:189px;background:#ffffff;color:#404040;">Da Barra</div>
<div class="c l" style="left:867px;top:477px;width:190px;background:#ffffff;color:#404040;">Informática</div>
<div class="c cc" style="left:1057px;top:477px;width:83px;background:#ffffff;color:#e0303a;">0,00</div>
<div class="c cc" style="left:1140px;top:477px;width:83px;background:#ffffff;color:#404040;">1,00</div>
<div class="c cc" style="left:1223px;top:477px;width:82px;background:#ffffff;color:#404040;"><span style="position:absolute;left:3px;top:2px;right:1px;bottom:2px;background:#c4161c;color:#fff;font-weight:bold;line-height:17px;text-align:center">X</span></div>
<div class="c cc" style="left:1305px;top:477px;width:84px;background:#ffffff;color:#404040;">5,00</div>
<div class="c cc" style="left:1389px;top:477px;width:82px;background:#ffffff;color:#404040;">1,00</div>
<div class="c r" style="left:1471px;top:477px;width:114px;background:#ffffff;color:#404040;">R$10,00</div>
<div class="c r" style="left:1585px;top:477px;width:83px;background:#ffffff;color:#404040;">50,00</div>
<div class="c r" style="left:1668px;top:477px;width:111px;background:#ffffff;color:#404040;">R$10,00</div>
<div class="sel" style="top:498px"></div>
<div class="c cc" style="left:22px;top:498px;width:82px;background:#9ccaf4;color:#16264a;font-weight:bold;font-size:12.4px;">Ativo</div>
<div class="c cc" style="left:104px;top:498px;width:83px;background:#e9e9e9;color:#404040;">05/09/2021</div>
<div class="c cc" style="left:187px;top:498px;width:57px;background:#fffce6;color:#303030;font-weight:bold;">30</div>
<div class="c cc" style="left:244px;top:498px;width:57px;background:#e9e9e9;color:#404040;"></div>
<div class="c l" style="left:301px;top:498px;width:264px;background:#e9e9e9;color:#404040;font-size:11.8px;">MOUSE GAMER</div>
<div class="c l" style="left:565px;top:498px;width:113px;background:#e9e9e9;color:#404040;font-size:11.8px;">PACOTE</div>
<div class="c l" style="left:678px;top:498px;width:189px;background:#e9e9e9;color:#404040;">Saltin Plus</div>
<div class="c l" style="left:867px;top:498px;width:190px;background:#e9e9e9;color:#404040;"></div>
<div class="c cc" style="left:1057px;top:498px;width:83px;background:#ffffff;color:#e0303a;">0,00</div>
<div class="c cc" style="left:1140px;top:498px;width:83px;background:#ffffff;color:#e0303a;">0,00</div>
<div class="c cc" style="left:1223px;top:498px;width:82px;background:#e9e9e9;color:#404040;"></div>
<div class="c cc" style="left:1305px;top:498px;width:84px;background:#ffffff;color:#e0303a;">0,00</div>
<div class="c cc" style="left:1389px;top:498px;width:82px;background:#ffffff;color:#e0303a;">0,00</div>
<div class="c r" style="left:1471px;top:498px;width:114px;background:#e9e9e9;color:#404040;">R$140,00</div>
<div class="c r" style="left:1585px;top:498px;width:83px;background:#ffffff;color:#e0303a;">0,00</div>
<div class="c r" style="left:1668px;top:498px;width:111px;background:#e9e9e9;color:#404040;">R$140,00</div>
<div class="sel" style="top:519px"></div>
<div class="c cc" style="left:22px;top:519px;width:82px;background:#9ccaf4;color:#16264a;font-weight:bold;font-size:12.4px;">Ativo</div>
<div class="c cc" style="left:104px;top:519px;width:83px;background:#ffffff;color:#404040;">05/09/2021</div>
<div class="c cc" style="left:187px;top:519px;width:57px;background:#fffce6;color:#303030;font-weight:bold;">26</div>
<div class="c cc" style="left:244px;top:519px;width:57px;background:#ffffff;color:#404040;"></div>
<div class="c l" style="left:301px;top:519px;width:264px;background:#ffffff;color:#404040;font-size:11.8px;">PANELA DE PRESSÃO</div>
<div class="c l" style="left:565px;top:519px;width:113px;background:#ffffff;color:#404040;font-size:11.8px;"></div>
<div class="c l" style="left:678px;top:519px;width:189px;background:#ffffff;color:#404040;">Saltin Plus</div>
<div class="c l" style="left:867px;top:519px;width:190px;background:#ffffff;color:#404040;"></div>
<div class="c cc" style="left:1057px;top:519px;width:83px;background:#ffffff;color:#e0303a;">0,00</div>
<div class="c cc" style="left:1140px;top:519px;width:83px;background:#ffffff;color:#e0303a;">0,00</div>
<div class="c cc" style="left:1223px;top:519px;width:82px;background:#ffffff;color:#404040;"></div>
<div class="c cc" style="left:1305px;top:519px;width:84px;background:#ffffff;color:#e0303a;">0,00</div>
<div class="c cc" style="left:1389px;top:519px;width:82px;background:#ffffff;color:#e0303a;">0,00</div>
<div class="c r" style="left:1471px;top:519px;width:114px;background:#ffffff;color:#404040;">R$80,00</div>
<div class="c r" style="left:1585px;top:519px;width:83px;background:#ffffff;color:#e0303a;">0,00</div>
<div class="c r" style="left:1668px;top:519px;width:111px;background:#ffffff;color:#404040;">R$80,00</div>
<div class="sel" style="top:540px"></div>
<div class="c cc" style="left:22px;top:540px;width:82px;background:#9ccaf4;color:#16264a;font-weight:bold;font-size:12.4px;">Ativo</div>
<div class="c cc" style="left:104px;top:540px;width:83px;background:#e9e9e9;color:#404040;">10/01/2025</div>
<div class="c cc" style="left:187px;top:540px;width:57px;background:#fffce6;color:#303030;font-weight:bold;">149</div>
<div class="c cc" style="left:244px;top:540px;width:57px;background:#e9e9e9;color:#404040;"></div>
<div class="c l" style="left:301px;top:540px;width:264px;background:#e9e9e9;color:#404040;font-size:11.8px;">PARAFUSO M6 INOX</div>
<div class="c l" style="left:565px;top:540px;width:113px;background:#e9e9e9;color:#404040;font-size:11.8px;">UNIDADE</div>
<div class="c l" style="left:678px;top:540px;width:189px;background:#e9e9e9;color:#404040;"></div>
<div class="c l" style="left:867px;top:540px;width:190px;background:#e9e9e9;color:#404040;">Parafusos</div>
<div class="c cc" style="left:1057px;top:540px;width:83px;background:#ffffff;color:#e0303a;">0,00</div>
<div class="c cc" style="left:1140px;top:540px;width:83px;background:#ffffff;color:#e0303a;">0,00</div>
<div class="c cc" style="left:1223px;top:540px;width:82px;background:#e9e9e9;color:#404040;"></div>
<div class="c cc" style="left:1305px;top:540px;width:84px;background:#ffffff;color:#e0303a;">0,00</div>
<div class="c cc" style="left:1389px;top:540px;width:82px;background:#ffffff;color:#e0303a;">0,00</div>
<div class="c r" style="left:1471px;top:540px;width:114px;background:#e9e9e9;color:#404040;">R$1,20</div>
<div class="c r" style="left:1585px;top:540px;width:83px;background:#e9e9e9;color:#404040;">60,00</div>
<div class="c r" style="left:1668px;top:540px;width:111px;background:#e9e9e9;color:#404040;">R$1,92</div>
<div class="sel" style="top:561px"></div>
<div class="c cc" style="left:22px;top:561px;width:82px;background:#9ccaf4;color:#16264a;font-weight:bold;font-size:12.4px;">Ativo</div>
<div class="c cc" style="left:104px;top:561px;width:83px;background:#ffffff;color:#404040;">10/01/2025</div>
<div class="c cc" style="left:187px;top:561px;width:57px;background:#fffce6;color:#303030;font-weight:bold;">151</div>
<div class="c cc" style="left:244px;top:561px;width:57px;background:#ffffff;color:#404040;"></div>
<div class="c l" style="left:301px;top:561px;width:264px;background:#ffffff;color:#404040;font-size:11.8px;">PORCA INOX M5</div>
<div class="c l" style="left:565px;top:561px;width:113px;background:#ffffff;color:#404040;font-size:11.8px;">UNIDADE</div>
<div class="c l" style="left:678px;top:561px;width:189px;background:#ffffff;color:#404040;"></div>
<div class="c l" style="left:867px;top:561px;width:190px;background:#ffffff;color:#404040;">Porcas</div>
<div class="c cc" style="left:1057px;top:561px;width:83px;background:#ffffff;color:#e0303a;">0,00</div>
<div class="c cc" style="left:1140px;top:561px;width:83px;background:#ffffff;color:#e0303a;">0,00</div>
<div class="c cc" style="left:1223px;top:561px;width:82px;background:#ffffff;color:#404040;"></div>
<div class="c cc" style="left:1305px;top:561px;width:84px;background:#ffffff;color:#e0303a;">0,00</div>
<div class="c cc" style="left:1389px;top:561px;width:82px;background:#ffffff;color:#e0303a;">0,00</div>
<div class="c r" style="left:1471px;top:561px;width:114px;background:#ffffff;color:#404040;">R$0,80</div>
<div class="c r" style="left:1585px;top:561px;width:83px;background:#ffffff;color:#404040;">40,00</div>
<div class="c r" style="left:1668px;top:561px;width:111px;background:#ffffff;color:#404040;">R$1,12</div>
<div class="sel" style="top:582px"></div>
<div class="c cc" style="left:22px;top:582px;width:82px;background:#9ccaf4;color:#16264a;font-weight:bold;font-size:12.4px;">Ativo</div>
<div class="c cc" style="left:104px;top:582px;width:83px;background:#e9e9e9;color:#404040;">08/12/2020</div>
<div class="c cc" style="left:187px;top:582px;width:57px;background:#fffce6;color:#303030;font-weight:bold;">3</div>
<div class="c cc" style="left:244px;top:582px;width:57px;background:#e9e9e9;color:#404040;">PRT0010</div>
<div class="c l" style="left:301px;top:582px;width:264px;background:#e9e9e9;color:#404040;font-size:11.8px;">PORTÃO IMPERIAL</div>
<div class="c l" style="left:565px;top:582px;width:113px;background:#e9e9e9;color:#404040;font-size:11.8px;">PEÇA</div>
<div class="c l" style="left:678px;top:582px;width:189px;background:#e9e9e9;color:#404040;">Da Barra</div>
<div class="c l" style="left:867px;top:582px;width:190px;background:#e9e9e9;color:#404040;">Informática</div>
<div class="c cc" style="left:1057px;top:582px;width:83px;background:#ffffff;color:#e0303a;">0,00</div>
<div class="c cc" style="left:1140px;top:582px;width:83px;background:#e9e9e9;color:#404040;">1,00</div>
<div class="c cc" style="left:1223px;top:582px;width:82px;background:#e9e9e9;color:#404040;"><span style="position:absolute;left:3px;top:2px;right:1px;bottom:2px;background:#c4161c;color:#fff;font-weight:bold;line-height:17px;text-align:center">X</span></div>
<div class="c cc" style="left:1305px;top:582px;width:84px;background:#e9e9e9;color:#404040;">5,00</div>
<div class="c cc" style="left:1389px;top:582px;width:82px;background:#e9e9e9;color:#404040;">1,00</div>
<div class="c r" style="left:1471px;top:582px;width:114px;background:#e9e9e9;color:#404040;">R$14.417,75</div>
<div class="c r" style="left:1585px;top:582px;width:83px;background:#e9e9e9;color:#404040;">50,00</div>
<div class="c r" style="left:1668px;top:582px;width:111px;background:#e9e9e9;color:#404040;">R$21.626,63</div>
<div class="sel" style="top:603px"></div>
<div class="c cc" style="left:22px;top:603px;width:82px;background:#9ccaf4;color:#16264a;font-weight:bold;font-size:12.4px;">Ativo</div>
<div class="c cc" style="left:104px;top:603px;width:83px;background:#ffffff;color:#404040;">22/09/2021</div>
<div class="c cc" style="left:187px;top:603px;width:57px;background:#fffce6;color:#303030;font-weight:bold;">32</div>
<div class="c cc" style="left:244px;top:603px;width:57px;background:#ffffff;color:#404040;">PRT0010</div>
<div class="c l" style="left:301px;top:603px;width:264px;background:#ffffff;color:#404040;font-size:11.8px;">PORTÃO IMPERIAL</div>
<div class="c l" style="left:565px;top:603px;width:113px;background:#ffffff;color:#404040;font-size:11.8px;">PEÇA</div>
<div class="c l" style="left:678px;top:603px;width:189px;background:#ffffff;color:#404040;">Da Barra</div>
<div class="c l" style="left:867px;top:603px;width:190px;background:#ffffff;color:#404040;">Informática</div>
<div class="c cc" style="left:1057px;top:603px;width:83px;background:#ffffff;color:#e0303a;">0,00</div>
<div class="c cc" style="left:1140px;top:603px;width:83px;background:#ffffff;color:#404040;">1,00</div>
<div class="c cc" style="left:1223px;top:603px;width:82px;background:#ffffff;color:#404040;"><span style="position:absolute;left:3px;top:2px;right:1px;bottom:2px;background:#c4161c;color:#fff;font-weight:bold;line-height:17px;text-align:center">X</span></div>
<div class="c cc" style="left:1305px;top:603px;width:84px;background:#ffffff;color:#404040;">5,00</div>
<div class="c cc" style="left:1389px;top:603px;width:82px;background:#ffffff;color:#404040;">1,00</div>
<div class="c r" style="left:1471px;top:603px;width:114px;background:#ffffff;color:#404040;">R$4.265,45</div>
<div class="c r" style="left:1585px;top:603px;width:83px;background:#ffffff;color:#404040;">50,00</div>
<div class="c r" style="left:1668px;top:603px;width:111px;background:#ffffff;color:#404040;">R$6.398,17</div>
<div class="sel" style="top:624px"></div>
<div class="c cc" style="left:22px;top:624px;width:82px;background:#9ccaf4;color:#16264a;font-weight:bold;font-size:12.4px;">Ativo</div>
<div class="c cc" style="left:104px;top:624px;width:83px;background:#e9e9e9;color:#404040;">10/03/2022</div>
<div class="c cc" style="left:187px;top:624px;width:57px;background:#fffce6;color:#303030;font-weight:bold;">38</div>
<div class="c cc" style="left:244px;top:624px;width:57px;background:#e9e9e9;color:#404040;"></div>
<div class="c l" style="left:301px;top:624px;width:264px;background:#e9e9e9;color:#404040;font-size:11.8px;">PORTIFÓLIO</div>
<div class="c l" style="left:565px;top:624px;width:113px;background:#e9e9e9;color:#404040;font-size:11.8px;"></div>
<div class="c l" style="left:678px;top:624px;width:189px;background:#e9e9e9;color:#404040;">Olaria Tem de Tudo</div>
<div class="c l" style="left:867px;top:624px;width:190px;background:#e9e9e9;color:#404040;"></div>
<div class="c cc" style="left:1057px;top:624px;width:83px;background:#ffffff;color:#e0303a;">0,00</div>
<div class="c cc" style="left:1140px;top:624px;width:83px;background:#ffffff;color:#e0303a;">0,00</div>
<div class="c cc" style="left:1223px;top:624px;width:82px;background:#e9e9e9;color:#404040;"></div>
<div class="c cc" style="left:1305px;top:624px;width:84px;background:#ffffff;color:#e0303a;">0,00</div>
<div class="c cc" style="left:1389px;top:624px;width:82px;background:#ffffff;color:#e0303a;">0,00</div>
<div class="c r" style="left:1471px;top:624px;width:114px;background:#e9e9e9;color:#404040;">R$148.352,87</div>
<div class="c r" style="left:1585px;top:624px;width:83px;background:#ffffff;color:#e0303a;">0,00</div>
<div class="c r" style="left:1668px;top:624px;width:111px;background:#e9e9e9;color:#404040;">R$148.352,87</div>
<div class="sel" style="top:645px"></div>
<div class="c cc" style="left:22px;top:645px;width:82px;background:#9ccaf4;color:#16264a;font-weight:bold;font-size:12.4px;">Ativo</div>
<div class="c cc" style="left:104px;top:645px;width:83px;background:#ffffff;color:#404040;">08/06/2022</div>
<div class="c cc" style="left:187px;top:645px;width:57px;background:#fffce6;color:#303030;font-weight:bold;">39</div>
<div class="c cc" style="left:244px;top:645px;width:57px;background:#ffffff;color:#404040;"></div>
<div class="c l" style="left:301px;top:645px;width:264px;background:#ffffff;color:#404040;font-size:11.8px;">QGBT</div>
<div class="c l" style="left:565px;top:645px;width:113px;background:#ffffff;color:#404040;font-size:11.8px;"></div>
<div class="c l" style="left:678px;top:645px;width:189px;background:#ffffff;color:#404040;"></div>
<div class="c l" style="left:867px;top:645px;width:190px;background:#ffffff;color:#404040;"></div>
<div class="c cc" style="left:1057px;top:645px;width:83px;background:#ffffff;color:#e0303a;">0,00</div>
<div class="c cc" style="left:1140px;top:645px;width:83px;background:#ffffff;color:#e0303a;">0,00</div>
<div class="c cc" style="left:1223px;top:645px;width:82px;background:#ffffff;color:#404040;"></div>
<div class="c cc" style="left:1305px;top:645px;width:84px;background:#ffffff;color:#e0303a;">0,00</div>
<div class="c cc" style="left:1389px;top:645px;width:82px;background:#ffffff;color:#e0303a;">0,00</div>
<div class="c r" style="left:1471px;top:645px;width:114px;background:#ffffff;color:#404040;">R$178.558,80</div>
<div class="c r" style="left:1585px;top:645px;width:83px;background:#ffffff;color:#e0303a;">0,00</div>
<div class="c r" style="left:1668px;top:645px;width:111px;background:#ffffff;color:#404040;">R$178.558,80</div>
<div class="sel" style="top:666px"></div>
<div class="c cc" style="left:22px;top:666px;width:82px;background:#9ccaf4;color:#16264a;font-weight:bold;font-size:12.4px;">Ativo</div>
<div class="c cc" style="left:104px;top:666px;width:83px;background:#e9e9e9;color:#404040;">05/09/2021</div>
<div class="c cc" style="left:187px;top:666px;width:57px;background:#fffce6;color:#303030;font-weight:bold;">25</div>
<div class="c cc" style="left:244px;top:666px;width:57px;background:#e9e9e9;color:#404040;"></div>
<div class="c l" style="left:301px;top:666px;width:264px;background:#e9e9e9;color:#404040;font-size:11.8px;">QUADRO BRANCO DE MADEIRA</div>
<div class="c l" style="left:565px;top:666px;width:113px;background:#e9e9e9;color:#404040;font-size:11.8px;"></div>
<div class="c l" style="left:678px;top:666px;width:189px;background:#e9e9e9;color:#404040;">Saltin Plus</div>
<div class="c l" style="left:867px;top:666px;width:190px;background:#e9e9e9;color:#404040;"></div>
<div class="c cc" style="left:1057px;top:666px;width:83px;background:#ffffff;color:#e0303a;">0,00</div>
<div class="c cc" style="left:1140px;top:666px;width:83px;background:#ffffff;color:#e0303a;">0,00</div>
<div class="c cc" style="left:1223px;top:666px;width:82px;background:#e9e9e9;color:#404040;"></div>
<div class="c cc" style="left:1305px;top:666px;width:84px;background:#ffffff;color:#e0303a;">0,00</div>
<div class="c cc" style="left:1389px;top:666px;width:82px;background:#ffffff;color:#e0303a;">0,00</div>
<div class="c r" style="left:1471px;top:666px;width:114px;background:#e9e9e9;color:#404040;">R$80,00</div>
<div class="c r" style="left:1585px;top:666px;width:83px;background:#ffffff;color:#e0303a;">0,00</div>
<div class="c r" style="left:1668px;top:666px;width:111px;background:#e9e9e9;color:#404040;">R$80,00</div>
<div class="sel" style="top:687px"></div>
<div class="c cc" style="left:22px;top:687px;width:82px;background:#9ccaf4;color:#16264a;font-weight:bold;font-size:12.4px;">Ativo</div>
<div class="c cc" style="left:104px;top:687px;width:83px;background:#ffffff;color:#404040;">05/09/2021</div>
<div class="c cc" style="left:187px;top:687px;width:57px;background:#fffce6;color:#303030;font-weight:bold;">20</div>
<div class="c cc" style="left:244px;top:687px;width:57px;background:#ffffff;color:#404040;"></div>
<div class="c l" style="left:301px;top:687px;width:264px;background:#ffffff;color:#404040;font-size:11.8px;">QUADRO DECORATIVO 3X4</div>
<div class="c l" style="left:565px;top:687px;width:113px;background:#ffffff;color:#404040;font-size:11.8px;"></div>
<div class="c l" style="left:678px;top:687px;width:189px;background:#ffffff;color:#404040;">Aço Mil</div>
<div class="c l" style="left:867px;top:687px;width:190px;background:#ffffff;color:#404040;"></div>
<div class="c cc" style="left:1057px;top:687px;width:83px;background:#ffffff;color:#e0303a;">0,00</div>
<div class="c cc" style="left:1140px;top:687px;width:83px;background:#ffffff;color:#e0303a;">0,00</div>
<div class="c cc" style="left:1223px;top:687px;width:82px;background:#ffffff;color:#404040;"></div>
<div class="c cc" style="left:1305px;top:687px;width:84px;background:#ffffff;color:#e0303a;">0,00</div>
<div class="c cc" style="left:1389px;top:687px;width:82px;background:#ffffff;color:#e0303a;">0,00</div>
<div class="c r" style="left:1471px;top:687px;width:114px;background:#ffffff;color:#e0303a;">R$0,00</div>
<div class="c r" style="left:1585px;top:687px;width:83px;background:#ffffff;color:#e0303a;">0,00</div>
<div class="c r" style="left:1668px;top:687px;width:111px;background:#ffffff;color:#e0303a;">R$0,00</div>
<div class="sel" style="top:708px"></div>
<div class="c cc" style="left:22px;top:708px;width:82px;background:#9ccaf4;color:#16264a;font-weight:bold;font-size:12.4px;">Ativo</div>
<div class="c cc" style="left:104px;top:708px;width:83px;background:#e9e9e9;color:#404040;">05/09/2021</div>
<div class="c cc" style="left:187px;top:708px;width:57px;background:#fffce6;color:#303030;font-weight:bold;">16</div>
<div class="c cc" style="left:244px;top:708px;width:57px;background:#e9e9e9;color:#404040;"></div>
<div class="c l" style="left:301px;top:708px;width:264px;background:#e9e9e9;color:#404040;font-size:11.8px;">SAPATO QUERO QUERO</div>
<div class="c l" style="left:565px;top:708px;width:113px;background:#e9e9e9;color:#404040;font-size:11.8px;">SERVIÇO</div>
<div class="c l" style="left:678px;top:708px;width:189px;background:#e9e9e9;color:#404040;">Da Barra</div>
<div class="c l" style="left:867px;top:708px;width:190px;background:#e9e9e9;color:#404040;">MASSAS</div>
<div class="c cc" style="left:1057px;top:708px;width:83px;background:#ffffff;color:#e0303a;">0,00</div>
<div class="c cc" style="left:1140px;top:708px;width:83px;background:#ffffff;color:#e0303a;">0,00</div>
<div class="c cc" style="left:1223px;top:708px;width:82px;background:#e9e9e9;color:#404040;"></div>
<div class="c cc" style="left:1305px;top:708px;width:84px;background:#ffffff;color:#e0303a;">0,00</div>
<div class="c cc" style="left:1389px;top:708px;width:82px;background:#ffffff;color:#e0303a;">0,00</div>
<div class="c r" style="left:1471px;top:708px;width:114px;background:#e9e9e9;color:#404040;">R$50,00</div>
<div class="c r" style="left:1585px;top:708px;width:83px;background:#e9e9e9;color:#404040;">50,00</div>
<div class="c r" style="left:1668px;top:708px;width:111px;background:#e9e9e9;color:#404040;">R$75,00</div>
<div class="sel" style="top:729px"></div>
<div class="c cc" style="left:22px;top:729px;width:82px;background:#9ccaf4;color:#16264a;font-weight:bold;font-size:12.4px;">Ativo</div>
<div class="c cc" style="left:104px;top:729px;width:83px;background:#ffffff;color:#404040;">08/02/2022</div>
<div class="c cc" style="left:187px;top:729px;width:57px;background:#fffce6;color:#303030;font-weight:bold;">37</div>
<div class="c cc" style="left:244px;top:729px;width:57px;background:#ffffff;color:#404040;"></div>
<div class="c l" style="left:301px;top:729px;width:264px;background:#ffffff;color:#404040;font-size:11.8px;">SOPA DE LEGUMES</div>
<div class="c l" style="left:565px;top:729px;width:113px;background:#ffffff;color:#404040;font-size:11.8px;"></div>
<div class="c l" style="left:678px;top:729px;width:189px;background:#ffffff;color:#404040;">Olaria Tem de Tudo</div>
<div class="c l" style="left:867px;top:729px;width:190px;background:#ffffff;color:#404040;"></div>
<div class="c cc" style="left:1057px;top:729px;width:83px;background:#ffffff;color:#e0303a;">0,00</div>
<div class="c cc" style="left:1140px;top:729px;width:83px;background:#ffffff;color:#e0303a;">0,00</div>
<div class="c cc" style="left:1223px;top:729px;width:82px;background:#ffffff;color:#404040;"></div>
<div class="c cc" style="left:1305px;top:729px;width:84px;background:#ffffff;color:#e0303a;">0,00</div>
<div class="c cc" style="left:1389px;top:729px;width:82px;background:#ffffff;color:#e0303a;">0,00</div>
<div class="c r" style="left:1471px;top:729px;width:114px;background:#ffffff;color:#404040;">R$270,30</div>
<div class="c r" style="left:1585px;top:729px;width:83px;background:#ffffff;color:#e0303a;">0,00</div>
<div class="c r" style="left:1668px;top:729px;width:111px;background:#ffffff;color:#404040;">R$270,30</div>
<div class="sel" style="top:750px"></div>
<div class="c cc" style="left:22px;top:750px;width:82px;background:#9ccaf4;color:#16264a;font-weight:bold;font-size:12.4px;">Ativo</div>
<div class="c cc" style="left:104px;top:750px;width:83px;background:#e9e9e9;color:#404040;">05/09/2021</div>
<div class="c cc" style="left:187px;top:750px;width:57px;background:#fffce6;color:#303030;font-weight:bold;">23</div>
<div class="c cc" style="left:244px;top:750px;width:57px;background:#e9e9e9;color:#404040;"></div>
<div class="c l" style="left:301px;top:750px;width:264px;background:#e9e9e9;color:#404040;font-size:11.8px;">TECLADO GAMER</div>
<div class="c l" style="left:565px;top:750px;width:113px;background:#e9e9e9;color:#404040;font-size:11.8px;"></div>
<div class="c l" style="left:678px;top:750px;width:189px;background:#e9e9e9;color:#404040;">Saltin Plus</div>
<div class="c l" style="left:867px;top:750px;width:190px;background:#e9e9e9;color:#404040;"></div>
<div class="c cc" style="left:1057px;top:750px;width:83px;background:#ffffff;color:#e0303a;">0,00</div>
<div class="c cc" style="left:1140px;top:750px;width:83px;background:#ffffff;color:#e0303a;">0,00</div>
<div class="c cc" style="left:1223px;top:750px;width:82px;background:#e9e9e9;color:#404040;"></div>
<div class="c cc" style="left:1305px;top:750px;width:84px;background:#ffffff;color:#e0303a;">0,00</div>
<div class="c cc" style="left:1389px;top:750px;width:82px;background:#ffffff;color:#e0303a;">0,00</div>
<div class="c r" style="left:1471px;top:750px;width:114px;background:#ffffff;color:#e0303a;">R$0,00</div>
<div class="c r" style="left:1585px;top:750px;width:83px;background:#ffffff;color:#e0303a;">0,00</div>
<div class="c r" style="left:1668px;top:750px;width:111px;background:#ffffff;color:#e0303a;">R$0,00</div>
<div class="sel" style="top:771px"></div>
<div class="c" style="left:22px;top:771px;width:82px;background:#fff;border-color:#e6ecf1"></div>
<div class="c" style="left:104px;top:771px;width:83px;background:#fff;border-color:#e6ecf1"></div>
<div class="c" style="left:187px;top:771px;width:57px;background:#fff;border-color:#e6ecf1"></div>
<div class="c" style="left:244px;top:771px;width:57px;background:#fff;border-color:#e6ecf1"></div>
<div class="c" style="left:301px;top:771px;width:264px;background:#fff;border-color:#e6ecf1"></div>
<div class="c" style="left:565px;top:771px;width:113px;background:#fff;border-color:#e6ecf1"></div>
<div class="c" style="left:678px;top:771px;width:189px;background:#fff;border-color:#e6ecf1"></div>
<div class="c" style="left:867px;top:771px;width:190px;background:#fff;border-color:#e6ecf1"></div>
<div class="c" style="left:1057px;top:771px;width:83px;background:#fff;border-color:#e6ecf1"></div>
<div class="c" style="left:1140px;top:771px;width:83px;background:#fff;border-color:#e6ecf1"></div>
<div class="c" style="left:1223px;top:771px;width:82px;background:#fff;border-color:#e6ecf1"></div>
<div class="c" style="left:1305px;top:771px;width:84px;background:#fff;border-color:#e6ecf1"></div>
<div class="c" style="left:1389px;top:771px;width:82px;background:#fff;border-color:#e6ecf1"></div>
<div class="c" style="left:1471px;top:771px;width:114px;background:#fff;border-color:#e6ecf1"></div>
<div class="c" style="left:1585px;top:771px;width:83px;background:#fff;border-color:#e6ecf1"></div>
<div class="c" style="left:1668px;top:771px;width:111px;background:#fff;border-color:#e6ecf1"></div>
<div class="c" style="left:1779px;top:771px;width:114px;background:#fff;border-color:#e6ecf1"></div>
<div class="c" style="left:1893px;top:771px;width:20px;background:#fff;border-color:#e6ecf1"></div>
<div class="sel" style="top:792px"></div>
<div class="c" style="left:22px;top:792px;width:82px;background:#fff;border-color:#e6ecf1"></div>
<div class="c" style="left:104px;top:792px;width:83px;background:#fff;border-color:#e6ecf1"></div>
<div class="c" style="left:187px;top:792px;width:57px;background:#fff;border-color:#e6ecf1"></div>
<div class="c" style="left:244px;top:792px;width:57px;background:#fff;border-color:#e6ecf1"></div>
<div class="c" style="left:301px;top:792px;width:264px;background:#fff;border-color:#e6ecf1"></div>
<div class="c" style="left:565px;top:792px;width:113px;background:#fff;border-color:#e6ecf1"></div>
<div class="c" style="left:678px;top:792px;width:189px;background:#fff;border-color:#e6ecf1"></div>
<div class="c" style="left:867px;top:792px;width:190px;background:#fff;border-color:#e6ecf1"></div>
<div class="c" style="left:1057px;top:792px;width:83px;background:#fff;border-color:#e6ecf1"></div>
<div class="c" style="left:1140px;top:792px;width:83px;background:#fff;border-color:#e6ecf1"></div>
<div class="c" style="left:1223px;top:792px;width:82px;background:#fff;border-color:#e6ecf1"></div>
<div class="c" style="left:1305px;top:792px;width:84px;background:#fff;border-color:#e6ecf1"></div>
<div class="c" style="left:1389px;top:792px;width:82px;background:#fff;border-color:#e6ecf1"></div>
<div class="c" style="left:1471px;top:792px;width:114px;background:#fff;border-color:#e6ecf1"></div>
<div class="c" style="left:1585px;top:792px;width:83px;background:#fff;border-color:#e6ecf1"></div>
<div class="c" style="left:1668px;top:792px;width:111px;background:#fff;border-color:#e6ecf1"></div>
<div class="c" style="left:1779px;top:792px;width:114px;background:#fff;border-color:#e6ecf1"></div>
<div class="c" style="left:1893px;top:792px;width:20px;background:#fff;border-color:#e6ecf1"></div>
<div class="sel" style="top:813px"></div>
<div class="c" style="left:22px;top:813px;width:82px;background:#fff;border-color:#e6ecf1"></div>
<div class="c" style="left:104px;top:813px;width:83px;background:#fff;border-color:#e6ecf1"></div>
<div class="c" style="left:187px;top:813px;width:57px;background:#fff;border-color:#e6ecf1"></div>
<div class="c" style="left:244px;top:813px;width:57px;background:#fff;border-color:#e6ecf1"></div>
<div class="c" style="left:301px;top:813px;width:264px;background:#fff;border-color:#e6ecf1"></div>
<div class="c" style="left:565px;top:813px;width:113px;background:#fff;border-color:#e6ecf1"></div>
<div class="c" style="left:678px;top:813px;width:189px;background:#fff;border-color:#e6ecf1"></div>
<div class="c" style="left:867px;top:813px;width:190px;background:#fff;border-color:#e6ecf1"></div>
<div class="c" style="left:1057px;top:813px;width:83px;background:#fff;border-color:#e6ecf1"></div>
<div class="c" style="left:1140px;top:813px;width:83px;background:#fff;border-color:#e6ecf1"></div>
<div class="c" style="left:1223px;top:813px;width:82px;background:#fff;border-color:#e6ecf1"></div>
<div class="c" style="left:1305px;top:813px;width:84px;background:#fff;border-color:#e6ecf1"></div>
<div class="c" style="left:1389px;top:813px;width:82px;background:#fff;border-color:#e6ecf1"></div>
<div class="c" style="left:1471px;top:813px;width:114px;background:#fff;border-color:#e6ecf1"></div>
<div class="c" style="left:1585px;top:813px;width:83px;background:#fff;border-color:#e6ecf1"></div>
<div class="c" style="left:1668px;top:813px;width:111px;background:#fff;border-color:#e6ecf1"></div>
<div class="c" style="left:1779px;top:813px;width:114px;background:#fff;border-color:#e6ecf1"></div>
<div class="c" style="left:1893px;top:813px;width:20px;background:#fff;border-color:#e6ecf1"></div>
<div class="sel" style="top:834px"></div>
<div class="c" style="left:22px;top:834px;width:82px;background:#fff;border-color:#e6ecf1"></div>
<div class="c" style="left:104px;top:834px;width:83px;background:#fff;border-color:#e6ecf1"></div>
<div class="c" style="left:187px;top:834px;width:57px;background:#fff;border-color:#e6ecf1"></div>
<div class="c" style="left:244px;top:834px;width:57px;background:#fff;border-color:#e6ecf1"></div>
<div class="c" style="left:301px;top:834px;width:264px;background:#fff;border-color:#e6ecf1"></div>
<div class="c" style="left:565px;top:834px;width:113px;background:#fff;border-color:#e6ecf1"></div>
<div class="c" style="left:678px;top:834px;width:189px;background:#fff;border-color:#e6ecf1"></div>
<div class="c" style="left:867px;top:834px;width:190px;background:#fff;border-color:#e6ecf1"></div>
<div class="c" style="left:1057px;top:834px;width:83px;background:#fff;border-color:#e6ecf1"></div>
<div class="c" style="left:1140px;top:834px;width:83px;background:#fff;border-color:#e6ecf1"></div>
<div class="c" style="left:1223px;top:834px;width:82px;background:#fff;border-color:#e6ecf1"></div>
<div class="c" style="left:1305px;top:834px;width:84px;background:#fff;border-color:#e6ecf1"></div>
<div class="c" style="left:1389px;top:834px;width:82px;background:#fff;border-color:#e6ecf1"></div>
<div class="c" style="left:1471px;top:834px;width:114px;background:#fff;border-color:#e6ecf1"></div>
<div class="c" style="left:1585px;top:834px;width:83px;background:#fff;border-color:#e6ecf1"></div>
<div class="c" style="left:1668px;top:834px;width:111px;background:#fff;border-color:#e6ecf1"></div>
<div class="c" style="left:1779px;top:834px;width:114px;background:#fff;border-color:#e6ecf1"></div>
<div class="c" style="left:1893px;top:834px;width:20px;background:#fff;border-color:#e6ecf1"></div>
<div class="sel" style="top:855px"></div>
<div class="c" style="left:22px;top:855px;width:82px;background:#fff;border-color:#e6ecf1"></div>
<div class="c" style="left:104px;top:855px;width:83px;background:#fff;border-color:#e6ecf1"></div>
<div class="c" style="left:187px;top:855px;width:57px;background:#fff;border-color:#e6ecf1"></div>
<div class="c" style="left:244px;top:855px;width:57px;background:#fff;border-color:#e6ecf1"></div>
<div class="c" style="left:301px;top:855px;width:264px;background:#fff;border-color:#e6ecf1"></div>
<div class="c" style="left:565px;top:855px;width:113px;background:#fff;border-color:#e6ecf1"></div>
<div class="c" style="left:678px;top:855px;width:189px;background:#fff;border-color:#e6ecf1"></div>
<div class="c" style="left:867px;top:855px;width:190px;background:#fff;border-color:#e6ecf1"></div>
<div class="c" style="left:1057px;top:855px;width:83px;background:#fff;border-color:#e6ecf1"></div>
<div class="c" style="left:1140px;top:855px;width:83px;background:#fff;border-color:#e6ecf1"></div>
<div class="c" style="left:1223px;top:855px;width:82px;background:#fff;border-color:#e6ecf1"></div>
<div class="c" style="left:1305px;top:855px;width:84px;background:#fff;border-color:#e6ecf1"></div>
<div class="c" style="left:1389px;top:855px;width:82px;background:#fff;border-color:#e6ecf1"></div>
<div class="c" style="left:1471px;top:855px;width:114px;background:#fff;border-color:#e6ecf1"></div>
<div class="c" style="left:1585px;top:855px;width:83px;background:#fff;border-color:#e6ecf1"></div>
<div class="c" style="left:1668px;top:855px;width:111px;background:#fff;border-color:#e6ecf1"></div>
<div class="c" style="left:1779px;top:855px;width:114px;background:#fff;border-color:#e6ecf1"></div>
<div class="c" style="left:1893px;top:855px;width:20px;background:#fff;border-color:#e6ecf1"></div>
<div class="sel" style="top:876px"></div>
<div class="c" style="left:22px;top:876px;width:82px;background:#fff;border-color:#e6ecf1"></div>
<div class="c" style="left:104px;top:876px;width:83px;background:#fff;border-color:#e6ecf1"></div>
<div class="c" style="left:187px;top:876px;width:57px;background:#fff;border-color:#e6ecf1"></div>
<div class="c" style="left:244px;top:876px;width:57px;background:#fff;border-color:#e6ecf1"></div>
<div class="c" style="left:301px;top:876px;width:264px;background:#fff;border-color:#e6ecf1"></div>
<div class="c" style="left:565px;top:876px;width:113px;background:#fff;border-color:#e6ecf1"></div>
<div class="c" style="left:678px;top:876px;width:189px;background:#fff;border-color:#e6ecf1"></div>
<div class="c" style="left:867px;top:876px;width:190px;background:#fff;border-color:#e6ecf1"></div>
<div class="c" style="left:1057px;top:876px;width:83px;background:#fff;border-color:#e6ecf1"></div>
<div class="c" style="left:1140px;top:876px;width:83px;background:#fff;border-color:#e6ecf1"></div>
<div class="c" style="left:1223px;top:876px;width:82px;background:#fff;border-color:#e6ecf1"></div>
<div class="c" style="left:1305px;top:876px;width:84px;background:#fff;border-color:#e6ecf1"></div>
<div class="c" style="left:1389px;top:876px;width:82px;background:#fff;border-color:#e6ecf1"></div>
<div class="c" style="left:1471px;top:876px;width:114px;background:#fff;border-color:#e6ecf1"></div>
<div class="c" style="left:1585px;top:876px;width:83px;background:#fff;border-color:#e6ecf1"></div>
<div class="c" style="left:1668px;top:876px;width:111px;background:#fff;border-color:#e6ecf1"></div>
<div class="c" style="left:1779px;top:876px;width:114px;background:#fff;border-color:#e6ecf1"></div>
<div class="c" style="left:1893px;top:876px;width:20px;background:#fff;border-color:#e6ecf1"></div>
<div class="sel" style="top:897px"></div>
<div class="c" style="left:22px;top:897px;width:82px;background:#fff;border-color:#e6ecf1"></div>
<div class="c" style="left:104px;top:897px;width:83px;background:#fff;border-color:#e6ecf1"></div>
<div class="c" style="left:187px;top:897px;width:57px;background:#fff;border-color:#e6ecf1"></div>
<div class="c" style="left:244px;top:897px;width:57px;background:#fff;border-color:#e6ecf1"></div>
<div class="c" style="left:301px;top:897px;width:264px;background:#fff;border-color:#e6ecf1"></div>
<div class="c" style="left:565px;top:897px;width:113px;background:#fff;border-color:#e6ecf1"></div>
<div class="c" style="left:678px;top:897px;width:189px;background:#fff;border-color:#e6ecf1"></div>
<div class="c" style="left:867px;top:897px;width:190px;background:#fff;border-color:#e6ecf1"></div>
<div class="c" style="left:1057px;top:897px;width:83px;background:#fff;border-color:#e6ecf1"></div>
<div class="c" style="left:1140px;top:897px;width:83px;background:#fff;border-color:#e6ecf1"></div>
<div class="c" style="left:1223px;top:897px;width:82px;background:#fff;border-color:#e6ecf1"></div>
<div class="c" style="left:1305px;top:897px;width:84px;background:#fff;border-color:#e6ecf1"></div>
<div class="c" style="left:1389px;top:897px;width:82px;background:#fff;border-color:#e6ecf1"></div>
<div class="c" style="left:1471px;top:897px;width:114px;background:#fff;border-color:#e6ecf1"></div>
<div class="c" style="left:1585px;top:897px;width:83px;background:#fff;border-color:#e6ecf1"></div>
<div class="c" style="left:1668px;top:897px;width:111px;background:#fff;border-color:#e6ecf1"></div>
<div class="c" style="left:1779px;top:897px;width:114px;background:#fff;border-color:#e6ecf1"></div>
<div class="c" style="left:1893px;top:897px;width:20px;background:#fff;border-color:#e6ecf1"></div>
<div class="sel" style="top:918px"></div>
<div class="c" style="left:22px;top:918px;width:82px;background:#fff;border-color:#e6ecf1"></div>
<div class="c" style="left:104px;top:918px;width:83px;background:#fff;border-color:#e6ecf1"></div>
<div class="c" style="left:187px;top:918px;width:57px;background:#fff;border-color:#e6ecf1"></div>
<div class="c" style="left:244px;top:918px;width:57px;background:#fff;border-color:#e6ecf1"></div>
<div class="c" style="left:301px;top:918px;width:264px;background:#fff;border-color:#e6ecf1"></div>
<div class="c" style="left:565px;top:918px;width:113px;background:#fff;border-color:#e6ecf1"></div>
<div class="c" style="left:678px;top:918px;width:189px;background:#fff;border-color:#e6ecf1"></div>
<div class="c" style="left:867px;top:918px;width:190px;background:#fff;border-color:#e6ecf1"></div>
<div class="c" style="left:1057px;top:918px;width:83px;background:#fff;border-color:#e6ecf1"></div>
<div class="c" style="left:1140px;top:918px;width:83px;background:#fff;border-color:#e6ecf1"></div>
<div class="c" style="left:1223px;top:918px;width:82px;background:#fff;border-color:#e6ecf1"></div>
<div class="c" style="left:1305px;top:918px;width:84px;background:#fff;border-color:#e6ecf1"></div>
<div class="c" style="left:1389px;top:918px;width:82px;background:#fff;border-color:#e6ecf1"></div>
<div class="c" style="left:1471px;top:918px;width:114px;background:#fff;border-color:#e6ecf1"></div>
<div class="c" style="left:1585px;top:918px;width:83px;background:#fff;border-color:#e6ecf1"></div>
<div class="c" style="left:1668px;top:918px;width:111px;background:#fff;border-color:#e6ecf1"></div>
<div class="c" style="left:1779px;top:918px;width:114px;background:#fff;border-color:#e6ecf1"></div>
<div class="c" style="left:1893px;top:918px;width:20px;background:#fff;border-color:#e6ecf1"></div>
<div class="sel" style="top:939px"></div>
<div class="c" style="left:22px;top:939px;width:82px;background:#fff;border-color:#e6ecf1"></div>
<div class="c" style="left:104px;top:939px;width:83px;background:#fff;border-color:#e6ecf1"></div>
<div class="c" style="left:187px;top:939px;width:57px;background:#fff;border-color:#e6ecf1"></div>
<div class="c" style="left:244px;top:939px;width:57px;background:#fff;border-color:#e6ecf1"></div>
<div class="c" style="left:301px;top:939px;width:264px;background:#fff;border-color:#e6ecf1"></div>
<div class="c" style="left:565px;top:939px;width:113px;background:#fff;border-color:#e6ecf1"></div>
<div class="c" style="left:678px;top:939px;width:189px;background:#fff;border-color:#e6ecf1"></div>
<div class="c" style="left:867px;top:939px;width:190px;background:#fff;border-color:#e6ecf1"></div>
<div class="c" style="left:1057px;top:939px;width:83px;background:#fff;border-color:#e6ecf1"></div>
<div class="c" style="left:1140px;top:939px;width:83px;background:#fff;border-color:#e6ecf1"></div>
<div class="c" style="left:1223px;top:939px;width:82px;background:#fff;border-color:#e6ecf1"></div>
<div class="c" style="left:1305px;top:939px;width:84px;background:#fff;border-color:#e6ecf1"></div>
<div class="c" style="left:1389px;top:939px;width:82px;background:#fff;border-color:#e6ecf1"></div>
<div class="c" style="left:1471px;top:939px;width:114px;background:#fff;border-color:#e6ecf1"></div>
<div class="c" style="left:1585px;top:939px;width:83px;background:#fff;border-color:#e6ecf1"></div>
<div class="c" style="left:1668px;top:939px;width:111px;background:#fff;border-color:#e6ecf1"></div>
<div class="c" style="left:1779px;top:939px;width:114px;background:#fff;border-color:#e6ecf1"></div>
<div class="c" style="left:1893px;top:939px;width:20px;background:#fff;border-color:#e6ecf1"></div>
<div class="sel" style="top:960px"></div>
<div class="c" style="left:22px;top:960px;width:82px;background:#fff;border-color:#e6ecf1"></div>
<div class="c" style="left:104px;top:960px;width:83px;background:#fff;border-color:#e6ecf1"></div>
<div class="c" style="left:187px;top:960px;width:57px;background:#fff;border-color:#e6ecf1"></div>
<div class="c" style="left:244px;top:960px;width:57px;background:#fff;border-color:#e6ecf1"></div>
<div class="c" style="left:301px;top:960px;width:264px;background:#fff;border-color:#e6ecf1"></div>
<div class="c" style="left:565px;top:960px;width:113px;background:#fff;border-color:#e6ecf1"></div>
<div class="c" style="left:678px;top:960px;width:189px;background:#fff;border-color:#e6ecf1"></div>
<div class="c" style="left:867px;top:960px;width:190px;background:#fff;border-color:#e6ecf1"></div>
<div class="c" style="left:1057px;top:960px;width:83px;background:#fff;border-color:#e6ecf1"></div>
<div class="c" style="left:1140px;top:960px;width:83px;background:#fff;border-color:#e6ecf1"></div>
<div class="c" style="left:1223px;top:960px;width:82px;background:#fff;border-color:#e6ecf1"></div>
<div class="c" style="left:1305px;top:960px;width:84px;background:#fff;border-color:#e6ecf1"></div>
<div class="c" style="left:1389px;top:960px;width:82px;background:#fff;border-color:#e6ecf1"></div>
<div class="c" style="left:1471px;top:960px;width:114px;background:#fff;border-color:#e6ecf1"></div>
<div class="c" style="left:1585px;top:960px;width:83px;background:#fff;border-color:#e6ecf1"></div>
<div class="c" style="left:1668px;top:960px;width:111px;background:#fff;border-color:#e6ecf1"></div>
<div class="c" style="left:1779px;top:960px;width:114px;background:#fff;border-color:#e6ecf1"></div>
<div class="c" style="left:1893px;top:960px;width:20px;background:#fff;border-color:#e6ecf1"></div>
<div class="sel" style="top:981px"></div>
<div class="c" style="left:22px;top:981px;width:82px;background:#fff;border-color:#e6ecf1"></div>
<div class="c" style="left:104px;top:981px;width:83px;background:#fff;border-color:#e6ecf1"></div>
<div class="c" style="left:187px;top:981px;width:57px;background:#fff;border-color:#e6ecf1"></div>
<div class="c" style="left:244px;top:981px;width:57px;background:#fff;border-color:#e6ecf1"></div>
<div class="c" style="left:301px;top:981px;width:264px;background:#fff;border-color:#e6ecf1"></div>
<div class="c" style="left:565px;top:981px;width:113px;background:#fff;border-color:#e6ecf1"></div>
<div class="c" style="left:678px;top:981px;width:189px;background:#fff;border-color:#e6ecf1"></div>
<div class="c" style="left:867px;top:981px;width:190px;background:#fff;border-color:#e6ecf1"></div>
<div class="c" style="left:1057px;top:981px;width:83px;background:#fff;border-color:#e6ecf1"></div>
<div class="c" style="left:1140px;top:981px;width:83px;background:#fff;border-color:#e6ecf1"></div>
<div class="c" style="left:1223px;top:981px;width:82px;background:#fff;border-color:#e6ecf1"></div>
<div class="c" style="left:1305px;top:981px;width:84px;background:#fff;border-color:#e6ecf1"></div>
<div class="c" style="left:1389px;top:981px;width:82px;background:#fff;border-color:#e6ecf1"></div>
<div class="c" style="left:1471px;top:981px;width:114px;background:#fff;border-color:#e6ecf1"></div>
<div class="c" style="left:1585px;top:981px;width:83px;background:#fff;border-color:#e6ecf1"></div>
<div class="c" style="left:1668px;top:981px;width:111px;background:#fff;border-color:#e6ecf1"></div>
<div class="c" style="left:1779px;top:981px;width:114px;background:#fff;border-color:#e6ecf1"></div>
<div class="c" style="left:1893px;top:981px;width:20px;background:#fff;border-color:#e6ecf1"></div>
<div class="a" style="left:2px;top:1001px;width:1915px;height:3px;background:#848484"></div>
<div class="a" style="left:2px;top:1004px;width:1912px;height:23px;background:#ececec"></div>
</div></body></html>
